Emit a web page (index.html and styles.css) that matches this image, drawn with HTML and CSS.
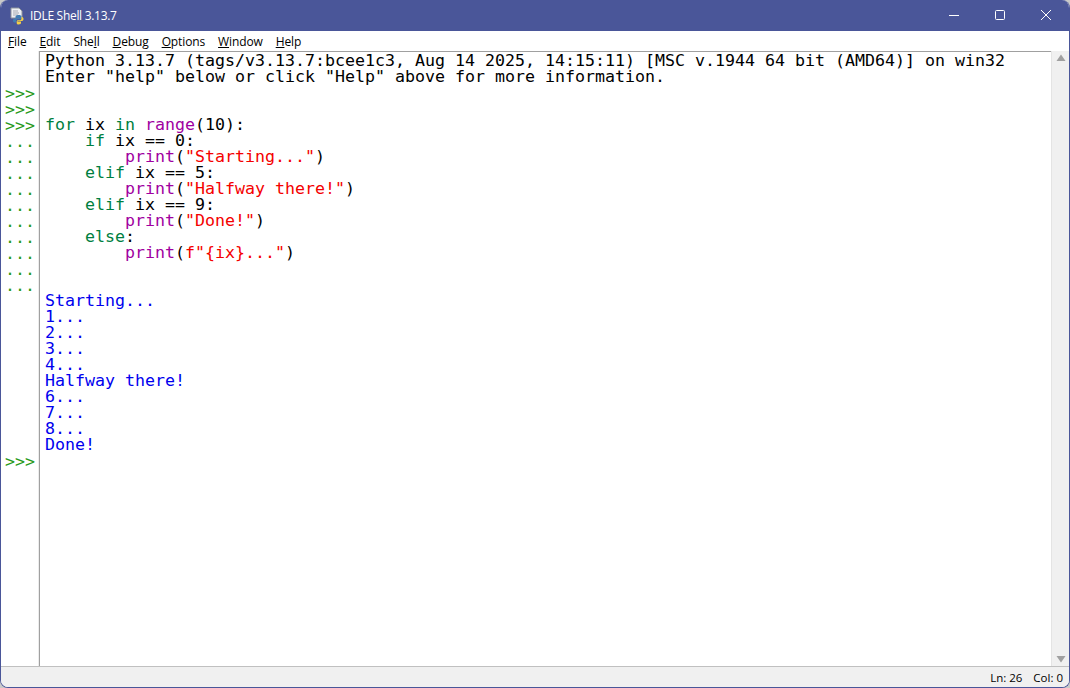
FILE: index.html
```html
<!DOCTYPE html>
<html lang="en">
<head>
<meta charset="utf-8">
<title>IDLE Shell 3.13.7</title>
<link rel="stylesheet" href="styles.css">
</head>
<body>
<div class="window">
  <header class="titlebar">
    <svg class="app-icon" width="18" height="18" viewBox="0 0 18 18">
      <path d="M2 1h8l3 3v7H2z" fill="#eef0f4" stroke="#8d939c" stroke-width="1"/>
      <path d="M4 4h5M4 6h6M4 8h5" stroke="#a5aab2" stroke-width="1"/>
      <path d="M9 8c-2 0-2.500 1-2.500 2v1H10v.6H5.500C4.500 11.600 4 12.500 4 13.500S4.500 15.500 5.500 15.500H7V14c0-1 .8-1.800 1.800-1.800h2.400c.8 0 1.300-.6 1.300-1.300V9.500C12.500 8.500 11.500 8 9 8z" fill="#3f7cb4"/>
      <path d="M9.500 17.500c2 0 2.500-1 2.500-2v-1H8.500V14H13c1 0 1.500-.9 1.500-1.900s-.5-2-1.500-2h-.5v1.400c0 1-.8 1.800-1.800 1.800H9c-.8 0-1.300.6-1.300 1.300v1.400c0 1 1 1.500 1.800 1.500z" fill="#f4cf47"/>
    </svg>
    <span class="title">IDLE Shell 3.13.7</span>
    <div class="controls">
      <svg class="ctl" width="46" height="31" viewBox="0 0 46 31"><path d="M18 15.500h10" stroke="#fff" stroke-width="1"/></svg>
      <svg class="ctl" width="46" height="31" viewBox="0 0 46 31"><rect x="18.500" y="10.500" width="9" height="9" rx="1" fill="none" stroke="#fff" stroke-width="1"/></svg>
      <svg class="ctl" width="46" height="31" viewBox="0 0 46 31"><path d="M18 10l10 10M28 10L18 20" stroke="#fff" stroke-width="1"/></svg>
    </div>
  </header>
  <nav class="menubar">
    <span class="menu"><u>F</u>ile</span>
    <span class="menu"><u>E</u>dit</span>
    <span class="menu">She<u>l</u>l</span>
    <span class="menu"><u>D</u>ebug</span>
    <span class="menu"><u>O</u>ptions</span>
    <span class="menu"><u>W</u>indow</span>
    <span class="menu"><u>H</u>elp</span>
  </nav>
  <main class="workspace">
    <pre class="gutter">


&gt;&gt;&gt;
&gt;&gt;&gt;
&gt;&gt;&gt;
...
...
...
...
...
...
...
...
...
...










&gt;&gt;&gt;</pre>
    <pre class="code">Python 3.13.7 (tags/v3.13.7:bcee1c3, Aug 14 2025, 14:15:11) [MSC v.1944 64 bit (AMD64)] on win32
Enter "help" below or click "Help" above for more information.


<span class="kw">for</span> ix <span class="kw">in</span> <span class="bi">range</span>(10):
    <span class="kw">if</span> ix == 0:
        <span class="bi">print</span>(<span class="str">"Starting..."</span>)
    <span class="kw">elif</span> ix == 5:
        <span class="bi">print</span>(<span class="str">"Halfway there!"</span>)
    <span class="kw">elif</span> ix == 9:
        <span class="bi">print</span>(<span class="str">"Done!"</span>)
    <span class="kw">else</span>:
        <span class="bi">print</span>(<span class="str">f"{ix}..."</span>)


<span class="out">Starting...
1...
2...
3...
4...
Halfway there!
6...
7...
8...
Done!</span></pre>
    <aside class="scrollbar">
      <svg width="18" height="16" viewBox="0 0 18 16"><path d="M9 3.500L13.500 10h-9z" fill="#a0a0a0"/></svg>
      <svg width="18" height="16" viewBox="0 0 18 16"><path d="M4.500 6h9L9 12.500z" fill="#a0a0a0"/></svg>
    </aside>
  </main>
  <footer class="statusbar">
    <span>Ln: 26</span>
    <span>Col: 0</span>
  </footer>
</div>
</body>
</html>
```
FILE: styles.css
```css
html, body {
  margin: 0;
  padding: 0;
  height: 100%;
  background: #c9c9c9;
  overflow: hidden;
}
.window {
  box-sizing: border-box;
  width: 1070px;
  height: 688px;
  display: flex;
  flex-direction: column;
  background: #fff;
  border: 1px solid #4a5699;
  border-top: 0;
  border-radius: 8px;
  overflow: hidden;
  font-family: "Open Sans", "Liberation Sans", sans-serif;
}
.titlebar {
  height: 31px;
  flex: none;
  display: flex;
  align-items: center;
  background: #4a5699;
  color: #fff;
  font-size: 12px;
}
.app-icon { margin-left: 8px; }
.title { margin-left: 3px; letter-spacing: -0.3px; }
.controls { margin-left: auto; display: flex; }
.ctl { display: block; }
.menubar {
  height: 20px;
  flex: none;
  display: flex;
  align-items: center;
  padding-left: 7px;
  gap: 13px;
  font-size: 12px;
  letter-spacing: -0.12px;
  color: #000;
  background: #fff;
}
.workspace {
  flex: 1;
  min-height: 0;
  display: flex;
  background: #fff;
}
.gutter, .code {
  margin: 0;
  font-family: "DejaVu Sans Mono", monospace;
  font-size: 16.62px;
  line-height: 16px;
}
.gutter {
  width: 34px;
  flex: none;
  padding: 3px 0 0 4px;
  color: #2a9a1a;
  border-right: 1px solid #a0a0a0;
  box-shadow: inset -1px 0 0 #ececec;
}
.code {
  flex: 1;
  min-width: 0;
  padding: 1px 0 0 5px;
  border-top: 1px solid #a0a0a0;
  color: #000;
  overflow: hidden;
}
.kw { color: #007f3f; }
.bi { color: #a000a0; }
.str { color: #f40000; }
.out { color: #0000ee; }
.scrollbar {
  width: 17px;
  flex: none;
  display: flex;
  flex-direction: column;
  justify-content: space-between;
  background: #f0f0f0;
  border-left: 1px solid #e4e4e4;
}
.statusbar {
  height: 20px;
  flex: none;
  display: flex;
  justify-content: flex-end;
  align-items: center;
  gap: 11px;
  padding-right: 6px;
  font-size: 11.500px;
  color: #000;
  background: #f0f0f0;
  border-top: 1px solid #c0c0c0;
}
```
